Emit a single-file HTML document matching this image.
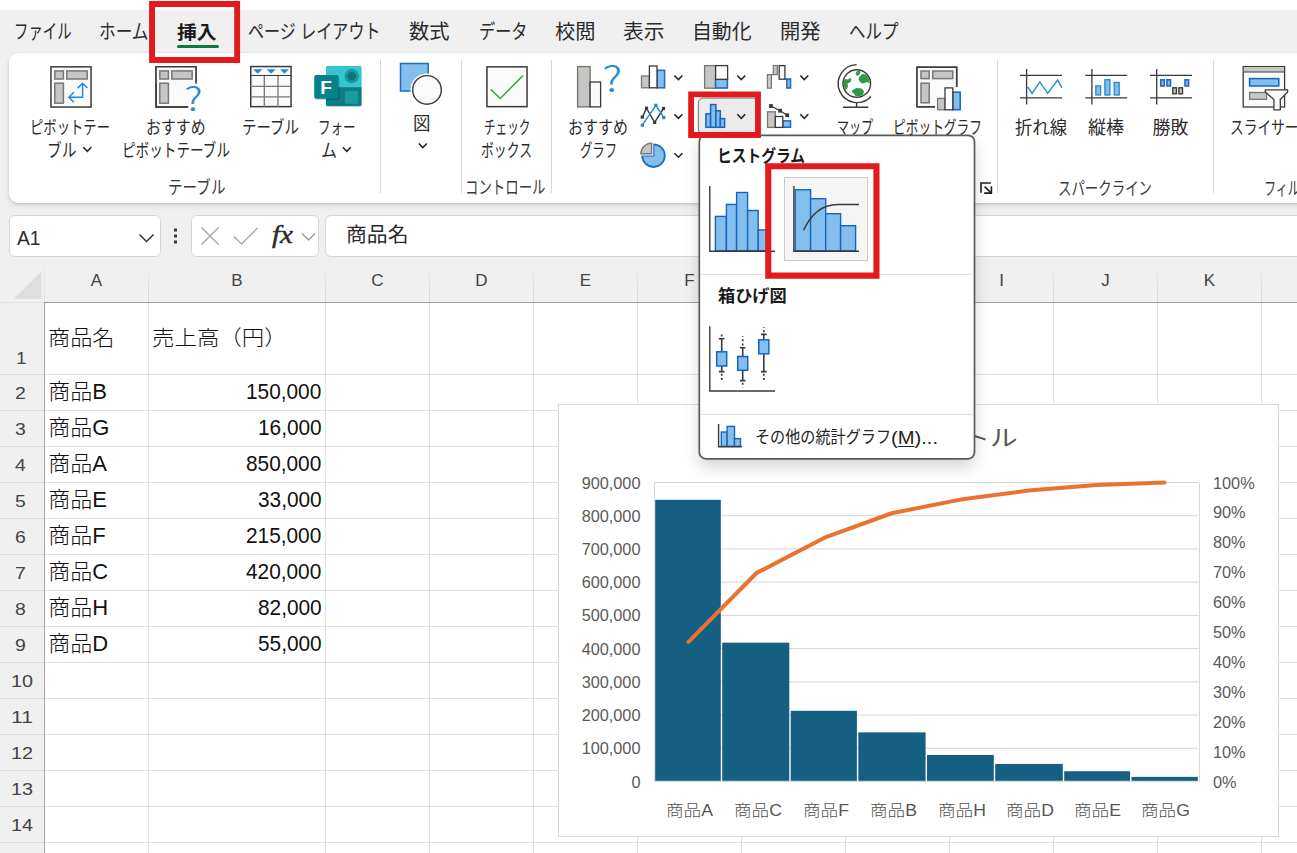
<!DOCTYPE html>
<html lang="ja"><head><meta charset="utf-8"><title>Excel - パレート図</title>
<style>
html,body{margin:0;padding:0}
body{width:1297px;height:853px;overflow:hidden;background:#f0f0f0;position:relative;font-family:'Liberation Sans','Noto Sans CJK JP',sans-serif;}
.b{position:absolute;box-sizing:border-box;display:block}
.sec{position:absolute;left:0;top:0;width:0;height:0;margin:0;padding:0}
.t{position:absolute;white-space:pre;transform-origin:0 50%;display:block}
</style></head><body>
<div class="b" style="left:0px;top:0px;width:1297px;height:10px;background:#fff;"></div>
<nav class="sec" id="ribbon-tabs" aria-label="リボン タブ">
<span class="t" style="left:13.50px;top:18.50px;font-size:20px;line-height:26px;color:#2b2b2b;transform:scaleX(0.7188);">ファイル</span>
<span class="t" style="left:98.50px;top:18.50px;font-size:20px;line-height:26px;color:#2b2b2b;transform:scaleX(0.8332);">ホーム</span>
<span class="t" style="left:247.50px;top:18.50px;font-size:20px;line-height:26px;color:#2b2b2b;transform:scaleX(0.8022);">ページ レイアウト</span>
<span class="t" style="left:409.00px;top:18.50px;font-size:20px;line-height:26px;color:#2b2b2b;transform:scaleX(1.0125);">数式</span>
<span class="t" style="left:478.50px;top:18.50px;font-size:20px;line-height:26px;color:#2b2b2b;transform:scaleX(0.8083);">データ</span>
<span class="t" style="left:555.00px;top:18.50px;font-size:20px;line-height:26px;color:#2b2b2b;transform:scaleX(1.0125);">校閲</span>
<span class="t" style="left:622.50px;top:18.50px;font-size:20px;line-height:26px;color:#2b2b2b;transform:scaleX(1.0375);">表示</span>
<span class="t" style="left:691.50px;top:18.50px;font-size:20px;line-height:26px;color:#2b2b2b;transform:scaleX(0.9917);">自動化</span>
<span class="t" style="left:779.50px;top:18.50px;font-size:20px;line-height:26px;color:#2b2b2b;transform:scaleX(1.0125);">開発</span>
<span class="t" style="left:848.50px;top:18.50px;font-size:20px;line-height:26px;color:#2b2b2b;transform:scaleX(0.8250);">ヘルプ</span>
<span class="t" style="left:176.80px;top:21.50px;font-size:18px;line-height:23px;color:#1a1a1a;font-weight:700;transform:scaleX(1.1000);">挿入</span>
<div class="b" style="left:177px;top:45px;width:42px;height:3px;background:#0f7a3e;border-radius:2px"></div>
</nav>
<section class="sec" id="ribbon" aria-label="挿入リボン">
<div class="b" style="left:9px;top:53px;width:1300px;height:150px;background:#fff;border-radius:9px;box-shadow:0 1px 3px rgba(0,0,0,.18),0 3px 6px rgba(0,0,0,.06)"></div>
<div class="b" style="left:380.0px;top:60px;width:1px;height:133px;background:#d6d6d6;"></div>
<div class="b" style="left:461.0px;top:60px;width:1px;height:133px;background:#d6d6d6;"></div>
<div class="b" style="left:551.0px;top:60px;width:1px;height:133px;background:#d6d6d6;"></div>
<div class="b" style="left:996.5px;top:60px;width:1px;height:133px;background:#d6d6d6;"></div>
<div class="b" style="left:1212.5px;top:60px;width:1px;height:133px;background:#d6d6d6;"></div>
<span class="t" style="left:30.00px;top:116.50px;font-size:18px;line-height:23px;color:#2b2b2b;transform:scaleX(0.7407);">ピボットテー</span>
<span class="t" style="left:46.50px;top:139.50px;font-size:18px;line-height:23px;color:#2b2b2b;transform:scaleX(0.8194);">ブル</span>
<span class="t" style="left:146.00px;top:116.50px;font-size:18px;line-height:23px;color:#2b2b2b;transform:scaleX(0.8264);">おすすめ</span>
<span class="t" style="left:122.00px;top:139.50px;font-size:18px;line-height:23px;color:#2b2b2b;transform:scaleX(0.7557);">ピボットテーブル</span>
<span class="t" style="left:242.00px;top:116.50px;font-size:18px;line-height:23px;color:#2b2b2b;transform:scaleX(0.8037);">テーブル</span>
<span class="t" style="left:318.00px;top:116.50px;font-size:18px;line-height:23px;color:#2b2b2b;transform:scaleX(0.6944);">フォー</span>
<span class="t" style="left:321.00px;top:139.50px;font-size:18px;line-height:23px;color:#2b2b2b;transform:scaleX(0.8889);">ム</span>
<span class="t" style="left:412.50px;top:113.10px;font-size:18px;line-height:23px;color:#2b2b2b;transform:scaleX(0.9722);">図</span>
<span class="t" style="left:483.50px;top:116.50px;font-size:18px;line-height:23px;color:#2b2b2b;transform:scaleX(0.6458);">チェック</span>
<span class="t" style="left:481.00px;top:139.50px;font-size:18px;line-height:23px;color:#2b2b2b;transform:scaleX(0.7136);">ボックス</span>
<span class="t" style="left:568.00px;top:116.50px;font-size:18px;line-height:23px;color:#2b2b2b;transform:scaleX(0.8333);">おすすめ</span>
<span class="t" style="left:579.50px;top:139.50px;font-size:18px;line-height:23px;color:#2b2b2b;transform:scaleX(0.6852);">グラフ</span>
<span class="t" style="left:837.00px;top:116.70px;font-size:18px;line-height:23px;color:#2b2b2b;transform:scaleX(0.6667);">マップ</span>
<span class="t" style="left:893.00px;top:116.70px;font-size:18px;line-height:23px;color:#2b2b2b;transform:scaleX(0.7063);">ピボットグラフ</span>
<span class="t" style="left:1015.00px;top:116.70px;font-size:18px;line-height:23px;color:#2b2b2b;transform:scaleX(0.9630);">折れ線</span>
<span class="t" style="left:1088.00px;top:116.70px;font-size:18px;line-height:23px;color:#2b2b2b;">縦棒</span>
<span class="t" style="left:1152.50px;top:116.70px;font-size:18px;line-height:23px;color:#2b2b2b;">勝敗</span>
<span class="t" style="left:1229.50px;top:116.70px;font-size:18px;line-height:23px;color:#2b2b2b;transform:scaleX(0.7611);">スライサー</span>
<span class="t" style="left:167.50px;top:177.30px;font-size:18px;line-height:23px;color:#3a3a3a;transform:scaleX(0.8108);">テーブル</span>
<span class="t" style="left:464.50px;top:177.30px;font-size:18px;line-height:23px;color:#3a3a3a;transform:scaleX(0.7454);">コントロール</span>
<span class="t" style="left:1058.00px;top:177.60px;font-size:18px;line-height:23px;color:#3a3a3a;transform:scaleX(0.7460);">スパークライン</span>
<span class="t" style="left:1264.00px;top:177.60px;font-size:18px;line-height:23px;color:#3a3a3a;transform:scaleX(0.6693);">フィルター</span>
<svg class="b" style="left:0px;top:52px;" width="1297" height="151" viewBox="0 52 1297 151"><rect x="50.95" y="66.85" width="40.10" height="40.20" fill="#fafafa" stroke="#3b3a39" stroke-width="1.5" /><rect x="54.80" y="70.90" width="8.60" height="8.10" fill="#c8c6c4" stroke="#797774" stroke-width="1.5" /><rect x="66.80" y="70.90" width="20.40" height="8.10" fill="#c8c6c4" stroke="#797774" stroke-width="1.5" /><rect x="54.80" y="83.20" width="8.60" height="20.00" fill="#c8c6c4" stroke="#797774" stroke-width="1.5" /><path d="M77.7 88.1L82.6 83.2L87.4 88.1M82.6 83.4V97.3H69M73.9 92.3L68.9 97.3L73.9 102.3" fill="none" stroke="#1e8bd8" stroke-width="1.5"/><path d="M195.950 83.6V66.85H156.05V107.05H188.2" fill="#fafafa" stroke="#3b3a39" stroke-width="1.5"/><rect x="156" y="67" width="40" height="17" fill="#fafafa"/><path d="M195.950 83.6V66.85H156.05V107.05H188.2" fill="none" stroke="#3b3a39" stroke-width="1.5"/><rect x="159.80" y="70.90" width="8.60" height="8.10" fill="#c8c6c4" stroke="#797774" stroke-width="1.5" /><rect x="171.80" y="70.90" width="20.40" height="8.10" fill="#c8c6c4" stroke="#797774" stroke-width="1.5" /><rect x="159.80" y="83.20" width="8.60" height="20.00" fill="#c8c6c4" stroke="#797774" stroke-width="1.5" /><text transform="translate(184.6 110.8) scale(1.22 1)" x="0" y="0" font-family="'Noto Sans CJK JP','Liberation Sans',sans-serif" font-weight="300" font-size="32.5" fill="#1e8bd8" stroke="#1e8bd8" stroke-width="0.25">?</text><rect x="250.75" y="66.55" width="40.30" height="40.10" fill="#fafafa" stroke="#3b3a39" stroke-width="1.5" /><path d="M264.3 75.5V107M278 75.5V107M250.5 86.3H291.5M250.5 96.9H291.5" stroke="#797774" stroke-width="1.3" fill="none"/><path d="M250.5 75.5H291.5" stroke="#3b3a39" stroke-width="1.2"/><path d="M253.3 69.3H262.3L257.8 73.8z" fill="#1e8bd8"/><path d="M266.6 69.3H275.6L271.1 73.8z" fill="#1e8bd8"/><path d="M280.0 69.3H289.0L284.5 73.8z" fill="#1e8bd8"/><clipPath id="fc"><rect x="325.8" y="65.8" width="36" height="40.8" rx="2.5"/></clipPath><g clip-path="url(#fc)"><rect x="325.8" y="65.8" width="36" height="21.3" fill="#37c6d0"/><rect x="325.8" y="87.1" width="36" height="19.5" fill="#0c7d83"/></g><circle cx="351.7" cy="76.1" r="7.3" fill="#1a9ba1"/><circle cx="351.7" cy="76.1" r="4.4" fill="#0f757b"/><rect x="344.9" y="90.9" width="13" height="12.9" fill="#1a9ba1"/><rect x="315.2" y="76" width="24.2" height="23.8" rx="2" fill="#000" opacity=".22"/><rect x="314.2" y="75" width="24.2" height="23.8" rx="2" fill="#038387"/><text x="326" y="94.4" text-anchor="middle" font-family="'Liberation Sans',sans-serif" font-weight="700" font-size="19" fill="#fff">F</text><rect x="400.50" y="63.50" width="27.70" height="27.50" fill="#83beec" stroke="#1b6ec2" stroke-width="1.5" /><circle cx="427" cy="89.9" r="16.5" fill="#fff"/><circle cx="427" cy="89.9" r="14.3" fill="#fafafa" stroke="#3b3a39" stroke-width="1.4"/><path d="M418.80 143.50L422.80 147.50L426.80 143.50" fill="none" stroke="#262626" stroke-width="1.6"/><path d="M83.30 147.30L87.30 151.30L91.30 147.30" fill="none" stroke="#262626" stroke-width="1.6"/><path d="M342.80 147.30L346.80 151.30L350.80 147.30" fill="none" stroke="#262626" stroke-width="1.6"/><rect x="486.95" y="66.85" width="40.10" height="39.80" fill="#fafafa" stroke="#3b3a39" stroke-width="1.5" /><path d="M490.7 89.3L500.3 98.5L523.1 75.5" fill="none" stroke="#37a84a" stroke-width="1.6"/><rect x="577.60" y="66.60" width="12.50" height="40.30" fill="#c8c6c4" stroke="#797774" stroke-width="1.4" /><rect x="590.10" y="82.00" width="10.50" height="24.90" fill="#fafafa" stroke="#3b3a39" stroke-width="1.3" /><text transform="translate(602.6 91.8) scale(1.22 1)" x="0" y="0" font-family="'Noto Sans CJK JP','Liberation Sans',sans-serif" font-weight="300" font-size="35.5" fill="#1e8bd8" stroke="#1e8bd8" stroke-width="0.25">?</text><rect x="641.50" y="76.00" width="7.90" height="11.80" fill="#c8c6c4" stroke="#797774" stroke-width="1.3" /><rect x="657.00" y="70.30" width="7.60" height="17.50" fill="#83beec" stroke="#1b6ec2" stroke-width="1.5" /><rect x="649.40" y="66.00" width="7.60" height="21.80" fill="#fff" stroke="#3b3a39" stroke-width="1.3" /><path d="M674.40 75.50L678.40 79.50L682.40 75.50" fill="none" stroke="#262626" stroke-width="1.6"/><path d="M674.40 114.30L678.40 118.30L682.40 114.30" fill="none" stroke="#262626" stroke-width="1.6"/><path d="M674.40 153.20L678.40 157.20L682.40 153.20" fill="none" stroke="#262626" stroke-width="1.6"/><path d="M642.3 117.1L646.5 108.2L654.6 122.4L663.5 108.5" fill="none" stroke="#3b3a39" stroke-width="1.4"/><path d="M642.3 125.2L655.9 105.3L663.8 117.6" fill="none" stroke="#1e8bd8" stroke-width="1.4"/><rect x="640.7" y="115.5" width="3.2" height="3.2" fill="#3b3a39"/><rect x="653.0" y="120.8" width="3.2" height="3.2" fill="#3b3a39"/><rect x="661.9" y="106.9" width="3.2" height="3.2" fill="#3b3a39"/><rect x="644.9" y="106.6" width="3.2" height="3.2" fill="#3b3a39"/><rect x="640.7" y="123.6" width="3.2" height="3.2" fill="#1e8bd8"/><rect x="654.3" y="103.7" width="3.2" height="3.2" fill="#1e8bd8"/><rect x="662.2" y="116.0" width="3.2" height="3.2" fill="#1e8bd8"/><path d="M653.5 155.7V144.4A11.3 11.3 0 1 1 642.2 155.7z" fill="#83beec" stroke="#1b6ec2" stroke-width="1.8"/><path d="M652.3 154.500V142.3A12.2 12.2 0 0 0 640.1 154.500z" fill="#fff" stroke="#fff" stroke-width="2"/><path d="M651.6 153.800V143.1A10.7 10.7 0 0 0 640.9 153.800z" fill="#c8c6c4" stroke="#797774" stroke-width="1.4"/><rect x="704.60" y="65.60" width="11.00" height="22.60" fill="#c8c6c4" stroke="#797774" stroke-width="1.3" /><rect x="715.60" y="79.30" width="11.80" height="8.70" fill="#83beec" stroke="#1b6ec2" stroke-width="1.6" /><rect x="715.60" y="65.60" width="12.00" height="13.70" fill="#fafafa" stroke="#3b3a39" stroke-width="1.3" /><path d="M737.30 75.50L741.30 79.50L745.30 75.50" fill="none" stroke="#262626" stroke-width="1.6"/><rect x="767.40" y="74.60" width="4.00" height="13.60" fill="#c8c6c4" stroke="#797774" stroke-width="1.2" /><rect x="773.30" y="65.60" width="4.00" height="9.00" fill="#c8c6c4" stroke="#797774" stroke-width="1.2" /><path d="M771.4 74.6H773.3" stroke="#797774" stroke-width="1.2"/><rect x="779.20" y="65.60" width="5.70" height="13.60" fill="#fafafa" stroke="#3b3a39" stroke-width="1.3" /><path d="M784.9 79.2H787" stroke="#3b3a39" stroke-width="1.2"/><rect x="786.90" y="79.00" width="3.60" height="9.00" fill="#83beec" stroke="#1b6ec2" stroke-width="1.6" /><path d="M800.30 75.50L804.30 79.50L808.30 75.50" fill="none" stroke="#262626" stroke-width="1.6"/><path d="M800.30 114.30L804.30 118.30L808.30 114.30" fill="none" stroke="#262626" stroke-width="1.6"/><rect x="767.50" y="111.80" width="7.80" height="15.60" fill="#c8c6c4" stroke="#797774" stroke-width="1.3" /><rect x="782.80" y="120.90" width="7.70" height="6.30" fill="#83beec" stroke="#1b6ec2" stroke-width="1.6" /><rect x="775.30" y="116.50" width="7.50" height="10.90" fill="#fff" stroke="#3b3a39" stroke-width="1.3" /><path d="M771 106L780.1 110.7L787.2 115.2" fill="none" stroke="#3b3a39" stroke-width="1.3"/><rect x="769.1" y="104.1" width="3.8" height="3.8" fill="#3b3a39"/><rect x="778.2" y="108.8" width="3.8" height="3.8" fill="#3b3a39"/><rect x="785.3" y="113.3" width="3.8" height="3.8" fill="#3b3a39"/><rect x="698.3" y="98" width="60" height="36" rx="5" fill="#ebebeb" stroke="#6a6a6a" stroke-width="1"/><rect x="705.90" y="113.80" width="4.70" height="13.50" fill="#83beec" stroke="#1565c0" stroke-width="1.5" /><rect x="710.60" y="104.60" width="5.30" height="22.70" fill="#83beec" stroke="#1565c0" stroke-width="1.5" /><rect x="715.90" y="110.80" width="4.40" height="16.50" fill="#83beec" stroke="#1565c0" stroke-width="1.5" /><rect x="720.30" y="118.60" width="4.30" height="8.70" fill="#83beec" stroke="#1565c0" stroke-width="1.5" /><path d="M737.30 114.30L741.30 118.30L745.30 114.30" fill="none" stroke="#262626" stroke-width="1.6"/><circle cx="856.8" cy="83.6" r="13.8" fill="#fff" stroke="#3b3a39" stroke-width="1.4"/><clipPath id="gc"><circle cx="856.8" cy="83.6" r="13"/></clipPath><g clip-path="url(#gc)" fill="#2e9a48"><path d="M856.5 71.5l2.5-1.5 1.5 2-1 2.5-2.5 1.5-1.5-2z"/><path d="M859.5 76.5l3-2.5 4.5 0.5 2.5 2.5 1.5 4-1 2.5-3-1.5-3.5 1.5-3-1-2-3z"/><path d="M843 81l2.5-2 2.5 0.5 2-1.5 1.5 1-1 3-3 1.5 0.5 3-1.5 3-3 1.5-2-3.5z"/><path d="M852.5 90l4-2 5 0.5 2.5 2.5-1 4.5-3 3-4-1-1.500-3.500-2.500-2z"/></g><path d="M856.6 64.6A19 19 0 1 0 871 96.6" fill="none" stroke="#3b3a39" stroke-width="1.4"/><path d="M856.6 102.5V107.2M843 107.2H868.3" fill="none" stroke="#3b3a39" stroke-width="1.4"/><path d="M956.650 87V67.25H917.05V106.65H935" fill="#fafafa" stroke="#3b3a39" stroke-width="1.5"/><rect x="917" y="67.3" width="39.7" height="39.4" fill="#fafafa"/><path d="M956.650 87V67.25H917.05V106.65H935" fill="none" stroke="#3b3a39" stroke-width="1.5"/><rect x="921.00" y="71.00" width="8.20" height="7.60" fill="#c8c6c4" stroke="#797774" stroke-width="1.5" /><rect x="932.70" y="71.00" width="20.10" height="7.60" fill="#c8c6c4" stroke="#797774" stroke-width="1.5" /><rect x="921.00" y="83.20" width="8.20" height="19.60" fill="#c8c6c4" stroke="#797774" stroke-width="1.5" /><rect x="937.60" y="98.40" width="7.40" height="11.40" fill="#c8c6c4" stroke="#797774" stroke-width="1.3" /><rect x="952.80" y="92.20" width="7.40" height="17.50" fill="#83beec" stroke="#1b6ec2" stroke-width="1.6" /><rect x="945.00" y="87.90" width="7.80" height="21.90" fill="#fff" stroke="#3b3a39" stroke-width="1.3" /><path d="M981 192.8V183H990.8M984.6 186.6L991.2 193M991.4 186.2V193.1H984.2" fill="none" stroke="#1f1f1f" stroke-width="1.6"/><path d="M1020 75.3H1062M1020 97.8H1062M1026.6 69V104.5" stroke="#3b3a39" stroke-width="1.3" fill="none"/><path d="M1085.2 75.3H1127.2M1085.2 97.8H1127.2M1091.9 69V104.5" stroke="#3b3a39" stroke-width="1.3" fill="none"/><path d="M1150 75.3H1192M1150 97.8H1192M1156.7 69V104.5" stroke="#3b3a39" stroke-width="1.3" fill="none"/><path d="M1027.7 86.8L1032.1 93.4L1039.9 81.9L1047.6 93.4L1057.6 80.1L1062 87.9" fill="none" stroke="#1e8bd8" stroke-width="1.4"/><rect x="1095.80" y="85.90" width="4.80" height="9.10" fill="#83beec" stroke="#1e8bd8" stroke-width="1.3" /><rect x="1104.90" y="79.70" width="5.00" height="15.30" fill="#83beec" stroke="#1e8bd8" stroke-width="1.3" /><rect x="1114.20" y="82.50" width="5.00" height="12.50" fill="#83beec" stroke="#1e8bd8" stroke-width="1.3" /><rect x="1160.70" y="79.80" width="3.60" height="6.20" fill="#83beec" stroke="#1565c0" stroke-width="1.5" /><rect x="1166.90" y="79.80" width="3.60" height="6.20" fill="#83beec" stroke="#1565c0" stroke-width="1.5" /><rect x="1185.00" y="79.80" width="3.60" height="6.20" fill="#83beec" stroke="#1565c0" stroke-width="1.5" /><rect x="1172.80" y="87.80" width="3.60" height="6.00" fill="#c8c6c4" stroke="#3b3a39" stroke-width="1.4" /><rect x="1178.90" y="87.80" width="3.60" height="6.00" fill="#c8c6c4" stroke="#3b3a39" stroke-width="1.4" /><rect x="1243.20" y="66.60" width="41.40" height="40.40" fill="#fafafa" stroke="#3b3a39" stroke-width="1.3" /><rect x="1243.8" y="67.2" width="40.2" height="4.6" fill="#c8c6c4"/><path d="M1243.2 72H1284.600" stroke="#3b3a39" stroke-width="1.1"/><rect x="1249.60" y="78.60" width="29.20" height="7.40" fill="#83beec" stroke="#1565c0" stroke-width="1.5" /><rect x="1249.60" y="92.50" width="17.00" height="6.80" fill="#c8c6c4" stroke="#797774" stroke-width="1.3" /><path d="M1265.3 89.8H1287.6V92L1280.300 99.5V109.8H1273.9V99.5L1265.3 92z" fill="#fafafa" stroke="#3b3a39" stroke-width="1.3" stroke-linejoin="round"/></svg>
</section>
<section class="sec" id="formula-bar" aria-label="数式バー">
<div class="b" style="left:9px;top:215.4px;width:151.5px;height:41.6px;background:#fff;border:1px solid #d6d6d6;border-radius:6px"></div>
<div class="b" style="left:191px;top:215.4px;width:127.5px;height:41.6px;background:#fff;border:1px solid #d6d6d6;border-radius:6px"></div>
<div class="b" style="left:325px;top:215.4px;width:1000px;height:41.6px;background:#fff;border:1px solid #d6d6d6;border-radius:6px"></div>
<span class="t" style="left:16.50px;top:225.00px;font-size:20px;line-height:26px;color:#2b2b2b;transform:scaleX(0.9604);">A1</span>
<span class="t" style="left:346.00px;top:222.00px;font-size:20px;line-height:26px;color:#2b2b2b;transform:scaleX(1.0417);">商品名</span>
<span class="t" style="left:271.50px;top:219.00px;font-size:25px;line-height:32px;color:#2b2b2b;font-family:'Liberation Serif',serif;transform:scaleX(1.1636);font-style:italic;-webkit-text-stroke:0.45px #2b2b2b;">fx</span>
<svg class="b" style="left:0px;top:205px;" width="330" height="60" viewBox="0 205 330 60">
<path d="M139.5 234.5l7 7 7-7" fill="none" stroke="#333" stroke-width="1.5"/>
<g fill="#3d3d3d"><rect x="174" y="228.5" width="3" height="3"/><rect x="174" y="234.5" width="3" height="3"/><rect x="174" y="240.5" width="3" height="3"/></g>
<path d="M201.5 227.5l17 17m0-17l-17 17" fill="none" stroke="#aaa" stroke-width="1.5"/>
<path d="M234 236.5l7.5 7.5 16-16" fill="none" stroke="#aaa" stroke-width="1.5"/>
<path d="M302 233.5l6.5 6.5 6.5-6.5" fill="none" stroke="#9a9a9a" stroke-width="1.3"/>
</svg>
</section>
<main class="sec" id="sheet" aria-label="ワークシート">
<div class="b" style="left:45px;top:303px;width:1260px;height:560px;background:#fff;"></div>
<svg class="b" style="left:0px;top:260px;" width="1297" height="593" viewBox="0 260 1297 593"><defs><linearGradient id="hg" x1="0" y1="0" x2="0" y2="1"><stop offset="0" stop-color="#ececec"/><stop offset=".5" stop-color="#dedede"/><stop offset="1" stop-color="#d6d6d6"/></linearGradient></defs><rect x="148" y="303" width="1" height="560" fill="#e1e1e1"/><rect x="148" y="269" width="1" height="33" fill="url(#hg)"/><rect x="325" y="303" width="1" height="560" fill="#e1e1e1"/><rect x="325" y="269" width="1" height="33" fill="url(#hg)"/><rect x="429" y="303" width="1" height="560" fill="#e1e1e1"/><rect x="429" y="269" width="1" height="33" fill="url(#hg)"/><rect x="533" y="303" width="1" height="560" fill="#e1e1e1"/><rect x="533" y="269" width="1" height="33" fill="url(#hg)"/><rect x="637" y="303" width="1" height="560" fill="#e1e1e1"/><rect x="637" y="269" width="1" height="33" fill="url(#hg)"/><rect x="741" y="303" width="1" height="560" fill="#e1e1e1"/><rect x="741" y="269" width="1" height="33" fill="url(#hg)"/><rect x="845" y="303" width="1" height="560" fill="#e1e1e1"/><rect x="845" y="269" width="1" height="33" fill="url(#hg)"/><rect x="949" y="303" width="1" height="560" fill="#e1e1e1"/><rect x="949" y="269" width="1" height="33" fill="url(#hg)"/><rect x="1053" y="303" width="1" height="560" fill="#e1e1e1"/><rect x="1053" y="269" width="1" height="33" fill="url(#hg)"/><rect x="1157" y="303" width="1" height="560" fill="#e1e1e1"/><rect x="1157" y="269" width="1" height="33" fill="url(#hg)"/><rect x="1261" y="303" width="1" height="560" fill="#e1e1e1"/><rect x="1261" y="269" width="1" height="33" fill="url(#hg)"/><rect x="45" y="374" width="1260" height="1" fill="#e1e1e1"/><rect x="0" y="374" width="44" height="1" fill="#dcdcdc"/><rect x="45" y="410" width="1260" height="1" fill="#e1e1e1"/><rect x="0" y="410" width="44" height="1" fill="#dcdcdc"/><rect x="45" y="446" width="1260" height="1" fill="#e1e1e1"/><rect x="0" y="446" width="44" height="1" fill="#dcdcdc"/><rect x="45" y="482" width="1260" height="1" fill="#e1e1e1"/><rect x="0" y="482" width="44" height="1" fill="#dcdcdc"/><rect x="45" y="518" width="1260" height="1" fill="#e1e1e1"/><rect x="0" y="518" width="44" height="1" fill="#dcdcdc"/><rect x="45" y="554" width="1260" height="1" fill="#e1e1e1"/><rect x="0" y="554" width="44" height="1" fill="#dcdcdc"/><rect x="45" y="590" width="1260" height="1" fill="#e1e1e1"/><rect x="0" y="590" width="44" height="1" fill="#dcdcdc"/><rect x="45" y="626" width="1260" height="1" fill="#e1e1e1"/><rect x="0" y="626" width="44" height="1" fill="#dcdcdc"/><rect x="45" y="662" width="1260" height="1" fill="#e1e1e1"/><rect x="0" y="662" width="44" height="1" fill="#dcdcdc"/><rect x="45" y="698" width="1260" height="1" fill="#e1e1e1"/><rect x="0" y="698" width="44" height="1" fill="#dcdcdc"/><rect x="45" y="734" width="1260" height="1" fill="#e1e1e1"/><rect x="0" y="734" width="44" height="1" fill="#dcdcdc"/><rect x="45" y="770" width="1260" height="1" fill="#e1e1e1"/><rect x="0" y="770" width="44" height="1" fill="#dcdcdc"/><rect x="45" y="806" width="1260" height="1" fill="#e1e1e1"/><rect x="0" y="806" width="44" height="1" fill="#dcdcdc"/><rect x="45" y="842" width="1260" height="1" fill="#e1e1e1"/><rect x="0" y="842" width="44" height="1" fill="#dcdcdc"/><rect x="44" y="302" width="1260" height="1" fill="#9f9f9f"/><rect x="44" y="302" width="1" height="560" fill="#a8a8a8"/><path d="M41.2 271.4V298.8H13.7z" fill="#dedede"/><rect x="0" y="302" width="44" height="1" fill="#e2e2e2"/><rect x="44" y="269" width="1" height="33" fill="#e6e6e6"/></svg>
<span class="t" style="left:90.83px;top:270.00px;font-size:17px;line-height:22px;color:#444;">A</span>
<span class="t" style="left:231.33px;top:270.00px;font-size:17px;line-height:22px;color:#444;">B</span>
<span class="t" style="left:371.36px;top:270.00px;font-size:17px;line-height:22px;color:#444;">C</span>
<span class="t" style="left:475.36px;top:270.00px;font-size:17px;line-height:22px;color:#444;">D</span>
<span class="t" style="left:579.83px;top:270.00px;font-size:17px;line-height:22px;color:#444;">E</span>
<span class="t" style="left:684.30px;top:270.00px;font-size:17px;line-height:22px;color:#444;">F</span>
<span class="t" style="left:786.88px;top:270.00px;font-size:17px;line-height:22px;color:#444;">G</span>
<span class="t" style="left:891.36px;top:270.00px;font-size:17px;line-height:22px;color:#444;">H</span>
<span class="t" style="left:999.13px;top:270.00px;font-size:17px;line-height:22px;color:#444;">I</span>
<span class="t" style="left:1101.25px;top:270.00px;font-size:17px;line-height:22px;color:#444;">J</span>
<span class="t" style="left:1203.83px;top:270.00px;font-size:17px;line-height:22px;color:#444;">K</span>
<span class="t" style="left:15.55px;top:347.60px;font-size:17px;line-height:22px;color:#444;transform:scaleX(1.1089);">1</span>
<span class="t" style="left:15.40px;top:383.00px;font-size:17px;line-height:22px;color:#444;transform:scaleX(1.1406);">2</span>
<span class="t" style="left:15.40px;top:419.00px;font-size:17px;line-height:22px;color:#444;transform:scaleX(1.1406);">3</span>
<span class="t" style="left:15.40px;top:455.00px;font-size:17px;line-height:22px;color:#444;transform:scaleX(1.1406);">4</span>
<span class="t" style="left:15.40px;top:491.00px;font-size:17px;line-height:22px;color:#444;transform:scaleX(1.1406);">5</span>
<span class="t" style="left:15.40px;top:527.00px;font-size:17px;line-height:22px;color:#444;transform:scaleX(1.1406);">6</span>
<span class="t" style="left:15.40px;top:563.00px;font-size:17px;line-height:22px;color:#444;transform:scaleX(1.1406);">7</span>
<span class="t" style="left:15.40px;top:599.00px;font-size:17px;line-height:22px;color:#444;transform:scaleX(1.1406);">8</span>
<span class="t" style="left:15.40px;top:635.00px;font-size:17px;line-height:22px;color:#444;transform:scaleX(1.1406);">9</span>
<span class="t" style="left:10.80px;top:671.00px;font-size:17px;line-height:22px;color:#444;transform:scaleX(1.1627);">10</span>
<span class="t" style="left:10.80px;top:707.00px;font-size:17px;line-height:22px;color:#444;transform:scaleX(1.2460);">11</span>
<span class="t" style="left:10.80px;top:743.00px;font-size:17px;line-height:22px;color:#444;transform:scaleX(1.1627);">12</span>
<span class="t" style="left:10.80px;top:779.00px;font-size:17px;line-height:22px;color:#444;transform:scaleX(1.1627);">13</span>
<span class="t" style="left:10.80px;top:815.00px;font-size:17px;line-height:22px;color:#444;transform:scaleX(1.1627);">14</span>
<span class="t" style="left:47.50px;top:324.20px;font-size:21px;line-height:27px;color:#111;font-weight:300;transform:scaleX(1.0556);">商品名</span>
<span class="t" style="left:152.30px;top:324.20px;font-size:21px;line-height:27px;color:#111;font-weight:300;transform:scaleX(1.0690);">売上高（円）</span>
<span class="t" style="left:48.20px;top:376.70px;font-size:22px;line-height:29px;color:#111;font-weight:300;">商品B</span>
<span class="t" style="left:245.92px;top:376.90px;font-size:22.5px;line-height:29px;color:#111;transform:scaleX(0.9255);">150,000</span>
<span class="t" style="left:48.20px;top:412.70px;font-size:22px;line-height:29px;color:#111;font-weight:300;">商品G</span>
<span class="t" style="left:257.50px;top:412.90px;font-size:22.5px;line-height:29px;color:#111;transform:scaleX(0.9255);">16,000</span>
<span class="t" style="left:48.20px;top:448.70px;font-size:22px;line-height:29px;color:#111;font-weight:300;">商品A</span>
<span class="t" style="left:245.92px;top:448.90px;font-size:22.5px;line-height:29px;color:#111;transform:scaleX(0.9255);">850,000</span>
<span class="t" style="left:48.20px;top:484.70px;font-size:22px;line-height:29px;color:#111;font-weight:300;">商品E</span>
<span class="t" style="left:257.50px;top:484.90px;font-size:22.5px;line-height:29px;color:#111;transform:scaleX(0.9255);">33,000</span>
<span class="t" style="left:48.20px;top:520.70px;font-size:22px;line-height:29px;color:#111;font-weight:300;">商品F</span>
<span class="t" style="left:245.92px;top:520.90px;font-size:22.5px;line-height:29px;color:#111;transform:scaleX(0.9255);">215,000</span>
<span class="t" style="left:48.20px;top:556.70px;font-size:22px;line-height:29px;color:#111;font-weight:300;">商品C</span>
<span class="t" style="left:245.92px;top:556.90px;font-size:22.5px;line-height:29px;color:#111;transform:scaleX(0.9255);">420,000</span>
<span class="t" style="left:48.20px;top:592.70px;font-size:22px;line-height:29px;color:#111;font-weight:300;">商品H</span>
<span class="t" style="left:257.50px;top:592.90px;font-size:22.5px;line-height:29px;color:#111;transform:scaleX(0.9255);">82,000</span>
<span class="t" style="left:48.20px;top:628.70px;font-size:22px;line-height:29px;color:#111;font-weight:300;">商品D</span>
<span class="t" style="left:257.50px;top:628.90px;font-size:22.5px;line-height:29px;color:#111;transform:scaleX(0.9255);">55,000</span>
</main>
<figure class="sec" id="pareto-chart" aria-label="パレート図">
<div class="b" style="left:558px;top:404px;width:721px;height:433px;background:#fff;border:1px solid #d9d9d9"></div>
<svg class="b" style="left:558px;top:404px;" width="721" height="433" viewBox="558 404 721 433"><rect x="654.5" y="482.00" width="544.0" height="1" fill="#d5d5d5"/><rect x="654.5" y="515.22" width="544.0" height="1" fill="#d5d5d5"/><rect x="654.5" y="548.44" width="544.0" height="1" fill="#d5d5d5"/><rect x="654.5" y="581.67" width="544.0" height="1" fill="#d5d5d5"/><rect x="654.5" y="614.89" width="544.0" height="1" fill="#d5d5d5"/><rect x="654.5" y="648.11" width="544.0" height="1" fill="#d5d5d5"/><rect x="654.5" y="681.33" width="544.0" height="1" fill="#d5d5d5"/><rect x="654.5" y="714.56" width="544.0" height="1" fill="#d5d5d5"/><rect x="654.5" y="747.78" width="544.0" height="1" fill="#d5d5d5"/><rect x="654.5" y="781.00" width="544.0" height="1" fill="#d5d5d5"/><rect x="654.0" y="482.5" width="1" height="299.0" fill="#d9d9d9"/><rect x="1199.0" y="482.5" width="1" height="299.0" fill="#d9d9d9"/><rect x="654.5" y="781.0" width="544.0" height="1" fill="#d9d9d9"/><rect x="655.20" y="499.81" width="65.60" height="280.99" fill="#156082"/><rect x="722.20" y="642.67" width="67.10" height="138.13" fill="#156082"/><rect x="790.70" y="710.77" width="66.20" height="70.03" fill="#156082"/><rect x="858.30" y="732.37" width="67.30" height="48.43" fill="#156082"/><rect x="927.00" y="754.96" width="66.80" height="25.84" fill="#156082"/><rect x="995.20" y="763.93" width="67.60" height="16.87" fill="#156082"/><rect x="1064.20" y="771.24" width="65.90" height="9.56" fill="#156082"/><rect x="1131.50" y="776.88" width="66.30" height="3.92" fill="#156082"/><polyline points="688.5,641.9 756.5,573.0 824.5,537.7 892.5,513.0 960.5,499.6 1028.5,490.5 1096.5,485.1 1164.5,482.5" fill="none" stroke="#e97132" stroke-width="4" stroke-linejoin="round" stroke-linecap="round"/></svg>
<span class="t" style="left:581.64px;top:472.50px;font-size:16.3px;line-height:21px;color:#595959;">900,000</span>
<span class="t" style="left:581.64px;top:505.72px;font-size:16.3px;line-height:21px;color:#595959;">800,000</span>
<span class="t" style="left:581.64px;top:538.94px;font-size:16.3px;line-height:21px;color:#595959;">700,000</span>
<span class="t" style="left:581.64px;top:572.17px;font-size:16.3px;line-height:21px;color:#595959;">600,000</span>
<span class="t" style="left:581.64px;top:605.39px;font-size:16.3px;line-height:21px;color:#595959;">500,000</span>
<span class="t" style="left:581.64px;top:638.61px;font-size:16.3px;line-height:21px;color:#595959;">400,000</span>
<span class="t" style="left:581.64px;top:671.83px;font-size:16.3px;line-height:21px;color:#595959;">300,000</span>
<span class="t" style="left:581.64px;top:705.06px;font-size:16.3px;line-height:21px;color:#595959;">200,000</span>
<span class="t" style="left:581.64px;top:738.28px;font-size:16.3px;line-height:21px;color:#595959;">100,000</span>
<span class="t" style="left:631.44px;top:771.50px;font-size:16.3px;line-height:21px;color:#595959;">0</span>
<span class="t" style="left:1213.00px;top:472.50px;font-size:16.3px;line-height:21px;color:#595959;">100%</span>
<span class="t" style="left:1213.00px;top:502.40px;font-size:16.3px;line-height:21px;color:#595959;">90%</span>
<span class="t" style="left:1213.00px;top:532.30px;font-size:16.3px;line-height:21px;color:#595959;">80%</span>
<span class="t" style="left:1213.00px;top:562.20px;font-size:16.3px;line-height:21px;color:#595959;">70%</span>
<span class="t" style="left:1213.00px;top:592.10px;font-size:16.3px;line-height:21px;color:#595959;">60%</span>
<span class="t" style="left:1213.00px;top:622.00px;font-size:16.3px;line-height:21px;color:#595959;">50%</span>
<span class="t" style="left:1213.00px;top:651.90px;font-size:16.3px;line-height:21px;color:#595959;">40%</span>
<span class="t" style="left:1213.00px;top:681.80px;font-size:16.3px;line-height:21px;color:#595959;">30%</span>
<span class="t" style="left:1213.00px;top:711.70px;font-size:16.3px;line-height:21px;color:#595959;">20%</span>
<span class="t" style="left:1213.00px;top:741.60px;font-size:16.3px;line-height:21px;color:#595959;">10%</span>
<span class="t" style="left:1213.00px;top:771.50px;font-size:16.3px;line-height:21px;color:#595959;">0%</span>
<span class="t" style="left:666.02px;top:800.10px;font-size:16px;line-height:21px;color:#555;font-weight:300;transform:scaleX(1.1000);">商品A</span>
<span class="t" style="left:733.54px;top:800.10px;font-size:16px;line-height:21px;color:#555;font-weight:300;transform:scaleX(1.1000);">商品C</span>
<span class="t" style="left:802.52px;top:800.10px;font-size:16px;line-height:21px;color:#555;font-weight:300;transform:scaleX(1.1000);">商品F</span>
<span class="t" style="left:870.02px;top:800.10px;font-size:16px;line-height:21px;color:#555;font-weight:300;transform:scaleX(1.1000);">商品B</span>
<span class="t" style="left:937.54px;top:800.10px;font-size:16px;line-height:21px;color:#555;font-weight:300;transform:scaleX(1.1000);">商品H</span>
<span class="t" style="left:1005.54px;top:800.10px;font-size:16px;line-height:21px;color:#555;font-weight:300;transform:scaleX(1.1000);">商品D</span>
<span class="t" style="left:1074.02px;top:800.10px;font-size:16px;line-height:21px;color:#555;font-weight:300;transform:scaleX(1.1000);">商品E</span>
<span class="t" style="left:1141.05px;top:800.10px;font-size:16px;line-height:21px;color:#555;font-weight:300;transform:scaleX(1.1000);">商品G</span>
<span class="t" style="left:816.75px;top:424.10px;font-size:22.5px;line-height:29px;color:#595959;transform:scaleX(1.2243);">グラフ タイトル</span>
</figure>
<div class="sec" id="stat-chart-menu" aria-label="統計グラフの挿入">
<div class="b" style="left:699px;top:135px;width:276px;height:324px;background:#fff;border-radius:7px;box-shadow:0 8px 16px rgba(0,0,0,.17)"></div>
<svg class="b" style="left:690px;top:126px;" width="294" height="342" viewBox="690 126 294 342"><rect x="699.3" y="135.3" width="275.2" height="323.5" rx="6.5" fill="#fff" stroke="#5a5a5a" stroke-width="1.7"/></svg>
<div class="b" style="left:700px;top:274px;width:274px;height:1px;background:#e1e1e1;"></div>
<div class="b" style="left:700px;top:414px;width:274px;height:1px;background:#e1e1e1;"></div>
<span class="t" style="left:717.00px;top:145.70px;font-size:17px;line-height:22px;color:#1a1a1a;font-weight:700;transform:scaleX(0.8670);">ヒストグラム</span>
<span class="t" style="left:717.80px;top:286.30px;font-size:17px;line-height:22px;color:#1a1a1a;font-weight:700;transform:scaleX(1.0103);">箱ひげ図</span>
<span class="t" style="left:755.00px;top:427.30px;font-size:17px;line-height:22px;color:#242424;transform:scaleX(0.8889);">その他の統計グラフ</span>
<span class="t" style="left:891.00px;top:426.80px;font-size:18px;line-height:23px;color:#242424;transform:scaleX(1.1190);text-underline-offset:2px;">(<u>M</u>)...</span>
<div class="b" style="left:784px;top:177px;width:84px;height:84px;background:#f5f5f5;border:1px solid #c9c9c9"></div>
<svg class="b" style="left:699px;top:135px;" width="276" height="324" viewBox="699 135 276 324"><rect x="715.40" y="216.40" width="11.00" height="34.40" fill="#83beec" stroke="#1565c0" stroke-width="1.4" /><rect x="726.40" y="204.40" width="10.20" height="46.40" fill="#83beec" stroke="#1565c0" stroke-width="1.4" /><rect x="736.60" y="192.50" width="11.00" height="58.30" fill="#83beec" stroke="#1565c0" stroke-width="1.4" /><rect x="747.60" y="210.50" width="10.60" height="40.30" fill="#83beec" stroke="#1565c0" stroke-width="1.4" /><rect x="758.20" y="229.90" width="10.70" height="20.90" fill="#83beec" stroke="#1565c0" stroke-width="1.4" /><path d="M709.8 186.1V251.200H775" fill="none" stroke="#3b3a39" stroke-width="1.4"/><rect x="795.20" y="189.80" width="15.40" height="61.00" fill="#83beec" stroke="#1565c0" stroke-width="1.4" /><rect x="810.60" y="198.70" width="15.10" height="52.10" fill="#83beec" stroke="#1565c0" stroke-width="1.4" /><rect x="825.70" y="213.70" width="14.90" height="37.10" fill="#83beec" stroke="#1565c0" stroke-width="1.4" /><rect x="840.60" y="225.70" width="15.00" height="25.10" fill="#83beec" stroke="#1565c0" stroke-width="1.4" /><path d="M793.9 186.1V251.200H859" fill="none" stroke="#3b3a39" stroke-width="1.4"/><path d="M803.6 230.3C810 216 820 204.6 837.7 204.4H859" fill="none" stroke="#3b3a39" stroke-width="1.5"/><path d="M709.8 326.2V391H775" fill="none" stroke="#3b3a39" stroke-width="1.4"/><path d="M721.7 337.8V332.2M721.7 372.6V382.3" stroke="#3b3a39" stroke-width="1.7" stroke-dasharray="2 2.300" stroke-dashoffset="-1.200" fill="none"/><path d="M721.7 338.8V371.6M718.9000000000001 338.8H724.5M718.9000000000001 371.6H724.5" stroke="#3b3a39" stroke-width="1.6" fill="none"/><rect x="716.70" y="351.80" width="10.00" height="14.20" fill="#83beec" stroke="#1565c0" stroke-width="1.5" /><path d="M742.7 346.8V336.3M742.7 381.6V387.2" stroke="#3b3a39" stroke-width="1.7" stroke-dasharray="2 2.300" stroke-dashoffset="-1.200" fill="none"/><path d="M742.7 347.8V380.6M739.9000000000001 347.8H745.5M739.9000000000001 380.6H745.5" stroke="#3b3a39" stroke-width="1.6" fill="none"/><rect x="737.70" y="356.50" width="10.00" height="13.80" fill="#83beec" stroke="#1565c0" stroke-width="1.5" /><path d="M763.8 333.4V327.3M763.8 372.6V382.3" stroke="#3b3a39" stroke-width="1.7" stroke-dasharray="2 2.300" stroke-dashoffset="-1.200" fill="none"/><path d="M763.8 334.4V371.6M761.0 334.4H766.5999999999999M761.0 371.6H766.5999999999999" stroke="#3b3a39" stroke-width="1.6" fill="none"/><rect x="758.80" y="339.80" width="10.00" height="14.00" fill="#83beec" stroke="#1565c0" stroke-width="1.5" /><rect x="721.30" y="432.00" width="5.80" height="14.30" fill="#83beec" stroke="#1565c0" stroke-width="1.4" /><rect x="727.10" y="426.40" width="7.40" height="19.90" fill="#83beec" stroke="#1565c0" stroke-width="1.4" /><rect x="734.50" y="438.60" width="6.00" height="7.70" fill="#83beec" stroke="#1565c0" stroke-width="1.4" /><path d="M718.6 424.1V446.8H741.8" fill="none" stroke="#3b3a39" stroke-width="1.4"/></svg>
</div>
<div class="sec" id="highlights">
<svg class="b" style="left:149px;top:1px;" width="93" height="63" viewBox="0 0 93 63"><path fill-rule="evenodd" fill="#e2191d" d="M0.10 0.00H91.10V61.90H0.10zM6.00 5.90V56.00H85.20V5.90z"/></svg>
<svg class="b" style="left:688px;top:91px;" width="74" height="48" viewBox="0 0 74 48"><path fill-rule="evenodd" fill="#e2191d" d="M0.20 0.50H72.90V46.90H0.20zM6.00 6.30V41.10H67.10V6.30z"/></svg>
<svg class="b" style="left:765px;top:163px;" width="116" height="117" viewBox="0 0 116 117"><path fill-rule="evenodd" fill="#e2191d" d="M0.20 0.20H114.50V115.70H0.20zM6.30 6.30V109.60H108.40V6.30z"/></svg>
</div>
</body></html>
